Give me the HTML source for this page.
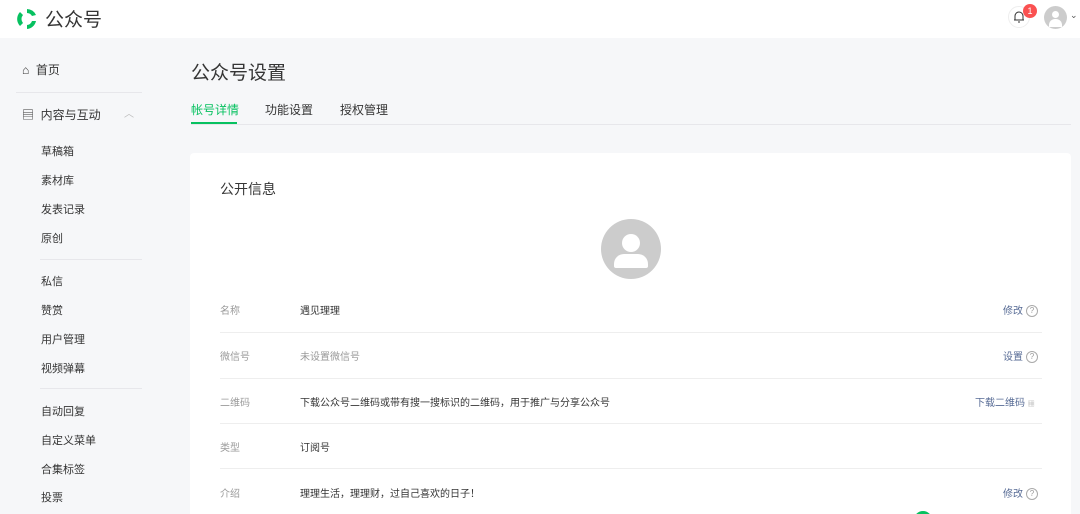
<!DOCTYPE html><html><head><meta charset="utf-8"><style>
*{margin:0;padding:0;box-sizing:border-box}
html{width:1080px;height:514px;overflow:hidden}
body{width:1080px;height:514px;overflow:hidden;background:#f6f7f9;font-family:"Liberation Sans","Noto Sans CJK SC",sans-serif;color:#353535;position:relative}
.hd{position:absolute;left:0;top:0;width:1080px;height:38px;background:#fff}
.a{position:absolute;white-space:nowrap}
.nav{font-size:11px;color:#353535}
.line{position:absolute;height:1px;background:#e7e7eb}
.card{position:absolute;left:190px;top:153px;width:881px;height:361px;background:#fff;border-radius:4px 4px 0 0}
.lb{font-size:10px;color:#9a9a9a}
.v{font-size:10px;color:#353535}
.op{font-size:10px;color:#576b95}
.q{display:inline-block;width:12px;height:12px;border:1px solid #aaa;border-radius:50%;font-size:8px;color:#999;text-align:center;line-height:10px;vertical-align:middle;margin-left:3px}
</style></head><body>
<div class="hd"></div>
<svg class="a" style="left:15px;top:7px" width="24" height="24" viewBox="0 0 24 24"><path d="M12 2a10 10 0 0 1 9 6l-4 1a6 6 0 0 0-5-3z M21 14a10 10 0 0 1-9 8v-4a6 6 0 0 0 5-4z M5 19A10 10 0 0 1 5 5l3 3a6 6 0 0 0 0 8z" fill="#07c160"/></svg>
<div class="a" style="left:45px;top:5px;font-size:19px;color:#353535">公众号</div>
<div class="a" style="left:1008px;top:6px;width:22px;height:22px;border:1px solid #eee;border-radius:50%"></div>
<svg class="a" style="left:1013px;top:10px" width="12" height="13" viewBox="0 0 12 13"><path d="M2 10V6a4 4 0 0 1 8 0v4h1H1h1M5 12h2" fill="none" stroke="#333" stroke-width="1"/></svg>
<div class="a" style="left:1023px;top:4px;width:14px;height:14px;background:#fa5151;border-radius:50%;color:#fff;font-size:9px;text-align:center;line-height:14px">1</div>
<div class="a" style="left:1044px;top:6px;width:23px;height:23px;background:#ccc;border-radius:50%;overflow:hidden"><div style="position:absolute;left:8px;top:5px;width:7px;height:7px;border-radius:50%;background:#fff"></div><div style="position:absolute;left:5px;top:13px;width:13px;height:8px;border-radius:6px 6px 0 0;background:#fff"></div></div>
<div class="a" style="left:1070px;top:10px;font-size:9px;color:#555">⌄</div>
<div class="a nav" style="left:22px;top:61px;font-size:12px">⌂&nbsp; 首页</div>
<div class="line" style="left:16px;top:92px;width:126px"></div>
<div class="a nav" style="left:22px;top:106px;font-size:12px">▤&nbsp; 内容与互动</div>
<div class="a" style="left:124px;top:105px;font-size:10px;color:#bbb">︿</div>
<div class="a nav" style="left:41px;top:143px">草稿箱</div>
<div class="a nav" style="left:41px;top:172px">素材库</div>
<div class="a nav" style="left:41px;top:201px">发表记录</div>
<div class="a nav" style="left:41px;top:230px">原创</div>
<div class="line" style="left:40px;top:259px;width:102px"></div>
<div class="a nav" style="left:41px;top:273px">私信</div>
<div class="a nav" style="left:41px;top:302px">赞赏</div>
<div class="a nav" style="left:41px;top:331px">用户管理</div>
<div class="a nav" style="left:41px;top:360px">视频弹幕</div>
<div class="line" style="left:40px;top:388px;width:102px"></div>
<div class="a nav" style="left:41px;top:403px">自动回复</div>
<div class="a nav" style="left:41px;top:432px">自定义菜单</div>
<div class="a nav" style="left:41px;top:461px">合集标签</div>
<div class="a nav" style="left:41px;top:489px">投票</div>
<div class="a" style="left:191px;top:58px;font-size:19px;color:#353535">公众号设置</div>
<div class="a" style="left:191px;top:101px;font-size:12px;color:#07c160">帐号详情</div>
<div class="a" style="left:191px;top:122px;width:46px;height:2px;background:#07c160"></div>
<div class="a" style="left:265px;top:101px;font-size:12px">功能设置</div>
<div class="a" style="left:340px;top:101px;font-size:12px">授权管理</div>
<div class="line" style="left:191px;top:124px;width:880px"></div>
<div class="card"></div>
<div class="a" style="left:220px;top:179px;font-size:14px">公开信息</div>
<div class="a" style="left:601px;top:219px;width:60px;height:60px;border-radius:50%;background:#ccc;overflow:hidden"><div style="position:absolute;left:21px;top:15px;width:18px;height:18px;border-radius:50%;background:#fff"></div><div style="position:absolute;left:13px;top:35px;width:34px;height:14px;border-radius:10px 10px 2px 2px;background:#fff"></div></div>
<div class="a lb" style="left:220px;top:302px">名称</div><div class="a v" style="left:300px;top:302px">遇见理理</div><div class="a op" style="left:1003px;top:302px">修改<span class="q">?</span></div>
<div class="line" style="left:220px;top:332px;width:822px;background:#eee"></div>
<div class="a lb" style="left:220px;top:348px">微信号</div><div class="a v" style="left:300px;top:348px;color:#999">未设置微信号</div><div class="a op" style="left:1003px;top:348px">设置<span class="q">?</span></div>
<div class="line" style="left:220px;top:378px;width:822px;background:#eee"></div>
<div class="a lb" style="left:220px;top:394px">二维码</div><div class="a v" style="left:300px;top:394px">下载公众号二维码或带有搜一搜标识的二维码，用于推广与分享公众号</div><div class="a op" style="left:975px;top:394px">下载二维码 <span style="font-size:7px;color:#aaa">▦</span></div>
<div class="line" style="left:220px;top:423px;width:822px;background:#eee"></div>
<div class="a lb" style="left:220px;top:439px">类型</div><div class="a v" style="left:300px;top:439px">订阅号</div>
<div class="line" style="left:220px;top:468px;width:822px;background:#eee"></div>
<div class="a lb" style="left:220px;top:485px">介绍</div><div class="a v" style="left:300px;top:485px">理理生活，理理财，过自己喜欢的日子！</div><div class="a op" style="left:1003px;top:485px">修改<span class="q">?</span></div>
<div class="a" style="left:914px;top:511px;width:18px;height:18px;border-radius:50%;background:#07c160"></div>
</body></html>
